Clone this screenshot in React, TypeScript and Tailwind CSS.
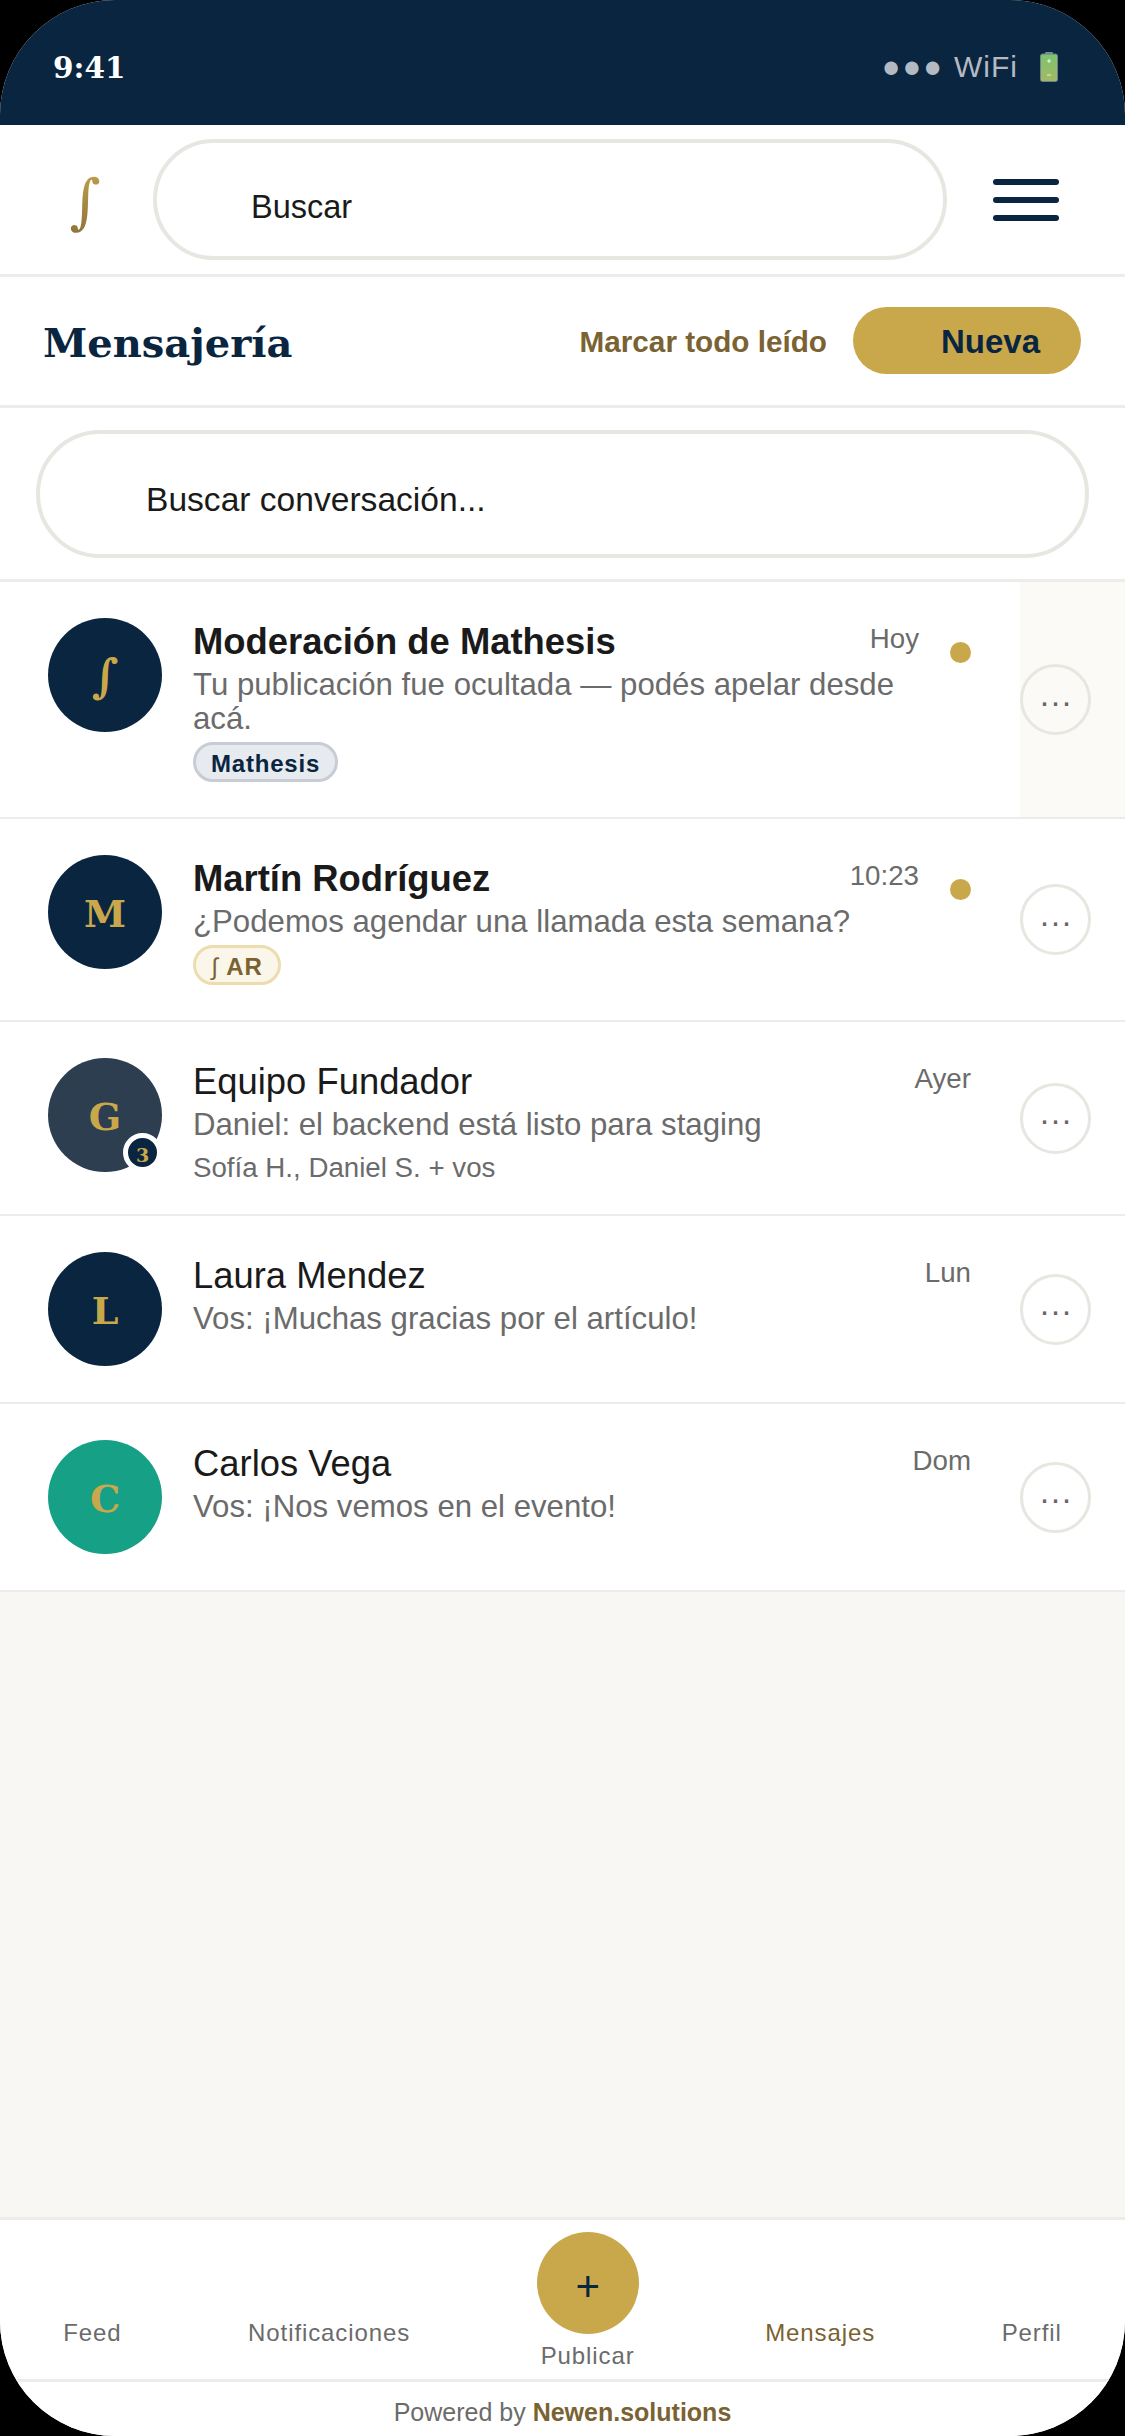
import React from 'react';

const sans = 'font-["Liberation_Sans",Arial,sans-serif]';
const serif = 'font-["DejaVu_Serif",Georgia,serif]';

type Conversation = {
  name: string;
  preview: string;
  time: string;
  initial: string;
  avatar: string;
  unread?: boolean;
  tag?: 'mathesis' | 'ar';
  members?: string;
  badge?: string;
  tinted?: boolean;
};

const conversations: Conversation[] = [
  {
    name: 'Moderación de Mathesis',
    preview: 'Tu publicación fue ocultada — podés apelar desde acá.',
    time: 'Hoy',
    initial: '∫',
    avatar: 'bg-[#0a2540]',
    unread: true,
    tag: 'mathesis',
    tinted: true,
  },
  {
    name: 'Martín Rodríguez',
    preview: '¿Podemos agendar una llamada esta semana?',
    time: '10:23',
    initial: 'M',
    avatar: 'bg-[#0a2540]',
    unread: true,
    tag: 'ar',
  },
  {
    name: 'Equipo Fundador',
    preview: 'Daniel: el backend está listo para staging',
    time: 'Ayer',
    initial: 'G',
    avatar: 'bg-[#2c3e50]',
    members: 'Sofía H., Daniel S. + vos',
    badge: '3',
  },
  {
    name: 'Laura Mendez',
    preview: 'Vos: ¡Muchas gracias por el artículo!',
    time: 'Lun',
    initial: 'L',
    avatar: 'bg-[#0a2540]',
  },
  {
    name: 'Carlos Vega',
    preview: 'Vos: ¡Nos vemos en el evento!',
    time: 'Dom',
    initial: 'C',
    avatar: 'bg-[#16a085]',
  },
];

const Battery: React.FC = () => (
  <svg width="18" height="30" viewBox="0 0 18 30" aria-hidden>
    <defs>
      <linearGradient id="cell" x1="0" y1="0" x2="0" y2="1">
        <stop offset="0" stopColor="#7cc36f" />
        <stop offset="1" stopColor="#a3b863" />
      </linearGradient>
    </defs>
    <rect x="5" y="0" width="8" height="3" rx="1" fill="#7f8c99" />
    <rect x="0.5" y="2" width="17" height="27.5" rx="2" fill="url(#cell)" stroke="#6f7f8c" strokeWidth="1" />
    <path d="M7 9h4M9 7v4M7 23h4" stroke="#e6f2dc" strokeWidth="1.2" />
  </svg>
);

const Row: React.FC<{ c: Conversation }> = ({ c }) => (
  <div className="flex items-center border-b-2 border-[#eeece8] bg-white">
    <div className="flex min-h-[186px] min-w-0 flex-1 gap-[31px] bg-white pt-[36px] pr-[49px] pb-[35px] pl-[48px]">
      <div className={`relative flex h-[114px] w-[114px] shrink-0 items-center justify-center rounded-full pt-[2px] ${c.avatar}`}>
        <span className={`${serif} font-bold text-[#c9a84c] ${c.initial === '∫' ? 'text-[46px]' : 'text-[38px]'}`}>{c.initial}</span>
        {c.badge && (
          <span
            className={`${serif} absolute right-0 bottom-0 flex h-[39px] w-[39px] items-center justify-center rounded-full border-[5px] border-white bg-[#0a2540] pt-[6px] text-[19px] font-bold text-[#c9a84c]`}
          >
            {c.badge}
          </span>
        )}
      </div>
      <div className="mt-[2px] min-w-0 flex-1">
        <div className="flex items-start">
          <span className={`flex-1 text-[36.4px] leading-[44px] text-[#1a1a1a] ${c.unread ? 'font-bold' : ''}`}>
            {c.name}
          </span>
          <span className="text-[27.7px] leading-[38px] text-[#6b6b6b]">{c.time}</span>
        </div>
        <p className="mt-[4px] text-[31.2px] leading-[34px] text-[#6b6b6b]">{c.preview}</p>
        {c.tag === 'mathesis' && (
          <span className="mt-[6px] flex h-[40px] w-[145px] items-center justify-center rounded-full border-[3px] border-[#c8cdd5] bg-[#e7eaef] pt-[3px] text-[24px] font-bold tracking-[0.8px] text-[#0a2540]">
            Mathesis
          </span>
        )}
        {c.tag === 'ar' && (
          <span className="mt-[6px] flex h-[40px] w-[88px] items-center justify-center rounded-full border-[3px] border-[#ecdcae] bg-[#faf6e9] pt-[3px] text-[24px] font-bold tracking-[0.8px] text-[#7a6232]">
            <span className="font-normal">∫</span>&nbsp;AR
          </span>
        )}
        {c.members && <p className="mt-[14px] text-[27.7px] leading-[23px] text-[#6b6b6b]">{c.members}</p>}
      </div>
      {c.unread && <span className="mt-[24px] h-[21px] w-[21px] shrink-0 rounded-full bg-[#c9a84c]" />}
    </div>
    <div className={`flex w-[105px] shrink-0 self-stretch items-center ${c.tinted ? 'bg-[#fbfaf6]' : 'bg-white'}`}>
      <button className="flex h-[71px] w-[71px] items-center justify-center rounded-full border-[3px] border-[#e8e6e1] pt-[3px] text-[33px] leading-none text-[#666666]">
        ···
      </button>
    </div>
  </div>
);

const NavLabel: React.FC<{ label: string; active?: boolean }> = ({ label, active }) => (
  <span className={`mb-[31px] text-[24px] leading-[30px] tracking-[0.9px] ${active ? 'text-[#7a6232]' : 'text-[#6b6b6b]'}`}>
    {label}
  </span>
);

const App: React.FC = () => {
  return (
    <div className={`${sans} h-[2436px] w-[1125px] bg-black`}>
      <div className="flex h-full flex-col overflow-hidden rounded-[115px] bg-[#f8f7f3]">
        {/* status bar */}
        <div className="flex h-[125px] shrink-0 items-start justify-between bg-[#0a2540] pt-[47px] pr-[67px] pl-[53px]">
          <span className={`${serif} text-[29.5px] leading-[42px] font-bold text-white`}>9:41</span>
          <div className="flex items-center gap-[22px] pt-[5px]">
            <span className="flex items-center gap-[10px] text-[#b4bac1]">
              <span className="text-[31px] leading-[30px] tracking-[2px]">●●●</span>
              <span className="text-[30px] leading-[30px] tracking-[1px]">WiFi</span>
            </span>
            <Battery />
          </div>
        </div>

        {/* top bar */}
        <div className="flex h-[152px] shrink-0 items-center border-b-[3px] border-[#eeece8] bg-white pr-[66px] pl-[64px]">
          <span className={`${serif} mr-[47px] w-[42px] bg-gradient-to-b from-[#c9a84c] to-[#8b6f3a] bg-clip-text pt-[2px] text-center text-[60px] leading-[80px] text-transparent`}>
            ∫
          </span>
          <div className="flex h-[121px] flex-1 items-center rounded-full border-[4px] border-[#e8e6e1] pt-[16px] pl-[94px] text-[32.5px] text-[#1a1a1a]">
            Buscar
          </div>
          <div className="ml-[46px] flex w-[66px] flex-col gap-[12px]">
            <span className="h-[6px] rounded-full bg-[#0a2540]" />
            <span className="h-[6px] rounded-full bg-[#0a2540]" />
            <span className="h-[6px] rounded-full bg-[#0a2540]" />
          </div>
        </div>

        {/* title */}
        <div className="flex h-[131px] shrink-0 items-center border-b-[3px] border-[#eeece8] bg-white pr-[44px] pl-[43px]">
          <h1 className={`${serif} flex-1 pt-[3px] text-[40px] font-bold text-[#0a2540]`}>Mensajería</h1>
          <span className="mr-[26px] pt-[2px] text-[29.7px] font-bold text-[#7a6232]">Marcar todo leído</span>
          <button className="mb-[2px] flex h-[67px] w-[228px] items-center justify-end rounded-full bg-[#c9a84c] pt-[3px] pr-[41px] text-[33px] font-bold text-[#0a2540]">
            Nueva
          </button>
        </div>

        {/* conversation search */}
        <div className="shrink-0 border-b-[3px] border-[#eeece8] bg-white px-[36px] pt-[22px] pb-[21px]">
          <div className="flex h-[128px] items-center rounded-full border-[4px] border-[#e8e6e1] pt-[12px] pl-[106px] text-[33.6px] text-[#1a1a1a]">
            Buscar conversación...
          </div>
        </div>

        {/* conversations */}
        <div className="flex-1">
          {conversations.map((c) => (
            <Row key={c.name} c={c} />
          ))}
        </div>

        {/* bottom nav */}
        <nav className="flex h-[162px] shrink-0 items-end justify-around border-t-[3px] border-[#eeece8] bg-white">
          <NavLabel label="Feed" />
          <NavLabel label="Notificaciones" />
          <div className="flex flex-col items-center pb-[8px]">
            <button className="mb-[7px] flex h-[102px] w-[102px] items-center justify-center rounded-full bg-[#c9a84c] pt-[8px] text-[42px] leading-none text-[#0a2540]">
              +
            </button>
            <span className="text-[24px] leading-[30px] tracking-[0.9px] text-[#6b6b6b]">Publicar</span>
          </div>
          <NavLabel label="Mensajes" active />
          <NavLabel label="Perfil" />
        </nav>

        {/* footer */}
        <div className="flex h-[57px] shrink-0 items-center justify-center border-t-[3px] border-[#eeece8] bg-white pt-[7px] text-[25px] text-[#6b6b6b]">
          Powered by&nbsp;<strong className="font-bold text-[#7a6232]">Newen.solutions</strong>
        </div>
      </div>
    </div>
  );
};

export default App;
